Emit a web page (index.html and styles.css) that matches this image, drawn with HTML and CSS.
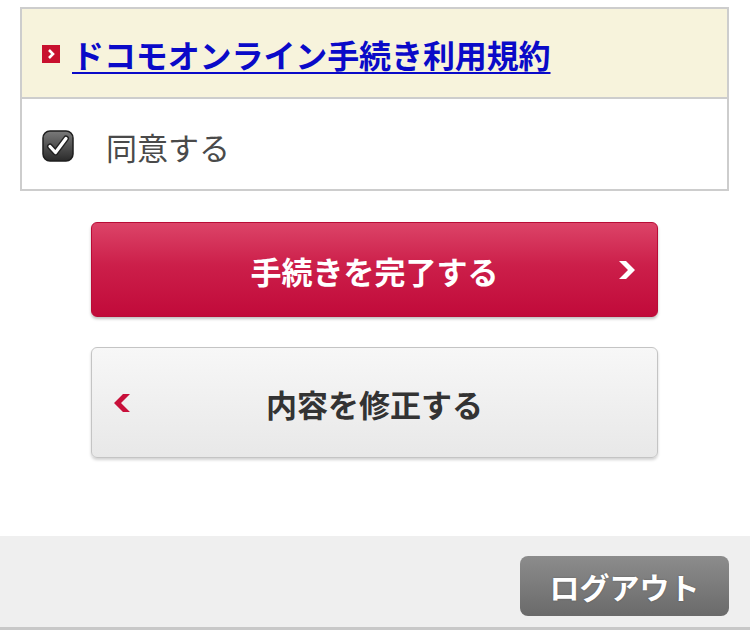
FILE: index.html
```html
<!DOCTYPE html>
<html lang="ja">
<head>
<meta charset="utf-8">
<title>手続き確認</title>
<link rel="stylesheet" href="styles.css">
</head>
<body>
<div class="page">
  <div class="terms">
    <div class="terms-head">
      <span class="bullet">
        <svg viewBox="0 0 18 18" width="18" height="18"><rect width="18" height="18" fill="#c8102e"/><polyline points="7,5 11,9 7,13" fill="none" stroke="#fff" stroke-width="2.6"/></svg>
      </span>
      <a class="terms-link" href="#">ドコモオンライン手続き利用規約</a>
    </div>
    <label class="agree">
      <span class="check">
        <svg viewBox="0 0 32 32" width="32" height="32">
          <defs><linearGradient id="cg" x1="0" y1="0" x2="0" y2="1"><stop offset="0" stop-color="#7a7a7a"/><stop offset="1" stop-color="#2a2a2a"/></linearGradient></defs>
          <rect x="1" y="1" width="30" height="30" rx="7" fill="url(#cg)" stroke="#1e1e1e" stroke-width="1.5"/>
          <polyline points="8,16.5 13.5,22.5 24,8.5" fill="none" stroke="#222" stroke-width="6" stroke-linecap="round" stroke-linejoin="round"/>
          <polyline points="8,16.5 13.5,22.5 24,8.5" fill="none" stroke="#fff" stroke-width="3.2" stroke-linecap="round" stroke-linejoin="round"/>
        </svg>
      </span>
      <span class="agree-text">同意する</span>
    </label>
  </div>

  <div class="actions">
    <button class="btn btn-primary" type="button">
      <span class="btn-side"></span>
      <span class="btn-label">手続きを完了する</span>
      <span class="btn-side side-right">
        <svg class="chev" viewBox="0 0 20 20" width="20" height="20"><path d="M2 1 L9 1 L18 10 L9 19 L2 19 L11 10 Z" fill="#fff"/></svg>
      </span>
    </button>
    <button class="btn btn-secondary" type="button">
      <span class="btn-side side-left">
        <svg class="chev" viewBox="0 0 20 20" width="20" height="20"><path d="M18 1 L11 1 L2 10 L11 19 L18 19 L9 10 Z" fill="#c8103a"/></svg>
      </span>
      <span class="btn-label">内容を修正する</span>
      <span class="btn-side"></span>
    </button>
  </div>
</div>
<footer class="footer">
  <button class="logout" type="button">ログアウト</button>
</footer>
</body>
</html>
```

FILE: styles.css
```css
* { box-sizing: border-box; }
html, body { margin: 0; padding: 0; background: #fff; }
body {
  font-family: "Noto Sans CJK JP", "Noto Sans", sans-serif;
  width: 750px;
  height: 634px;
  overflow: hidden;
}
.page {
  padding: 7px 21px 0 20px;
}
.terms {
  border: 2px solid #cdcdcd;
}
.terms-head {
  height: 90px;
  background: #f7f3dc;
  border-bottom: 2px solid #cdcdcd;
  display: flex;
  align-items: center;
  padding-left: 20px;
  padding-top: 2px;
}
.bullet {
  display: flex;
  width: 18px;
  height: 18px;
  margin-right: 12px;
}
.terms-link {
  font-size: 32px;
  font-weight: 700;
  color: #0a0ac8;
  text-decoration: underline;
  text-decoration-thickness: 2px;
  text-underline-offset: 4px;
  line-height: 1;
  letter-spacing: -0.1px;
}
.agree {
  height: 90px;
  display: flex;
  align-items: center;
  padding-left: 20px;
  padding-top: 4px;
}
.check {
  display: flex;
  width: 32px;
  height: 32px;
  margin-right: 32px;
}
.agree-text {
  font-size: 31px;
  color: #4a4a4a;
  line-height: 1;
}
.actions {
  margin-top: 31px;
  padding-left: 71px;
  padding-right: 71px;
  display: flex;
  flex-direction: column;
  gap: 30px;
}
.btn {
  display: grid;
  grid-template-columns: 1fr auto 1fr;
  align-items: center;
  width: 100%;
  border-radius: 6px;
  font-family: inherit;
  font-weight: 700;
  font-size: 31px;
  line-height: 1;
  padding: 0 20px;
  cursor: pointer;
}
.btn-primary {
  height: 95px;
  border: 1px solid #b80c36;
  background: linear-gradient(#dc4468, #cc1f4a 45%, #c10a3a);
  color: #fff;
  box-shadow: 0 2px 3px rgba(0,0,0,0.25);
}
.btn-secondary {
  height: 111px;
  border: 1px solid #c4c4c4;
  background: linear-gradient(#f7f7f7, #e8e8e8);
  color: #333;
  box-shadow: 0 2px 3px rgba(0,0,0,0.18);
}
.btn-label { padding-top: 2px; }
.btn-side { display: flex; align-items: center; }
.chev { flex: none; display: block; width: 20px; height: 20px; }
.side-right { justify-content: flex-end; }
.side-left { justify-content: flex-start; }
.footer {
  margin-top: 78px;
  height: 94px;
  background: #efefef;
  border-bottom: 3px solid #c8c8c8;
  display: flex;
  justify-content: flex-end;
  align-items: flex-start;
  padding: 20px 21px 0 0;
}
.logout {
  width: 209px;
  height: 60px;
  border: none;
  border-radius: 8px;
  background: linear-gradient(#8c8c8c, #6a6a6a);
  color: #fff;
  font-family: inherit;
  font-weight: 700;
  font-size: 30px;
  line-height: 1;
  text-shadow: 0 0 2px rgba(0,0,0,0.3);
  cursor: pointer;
}
```
